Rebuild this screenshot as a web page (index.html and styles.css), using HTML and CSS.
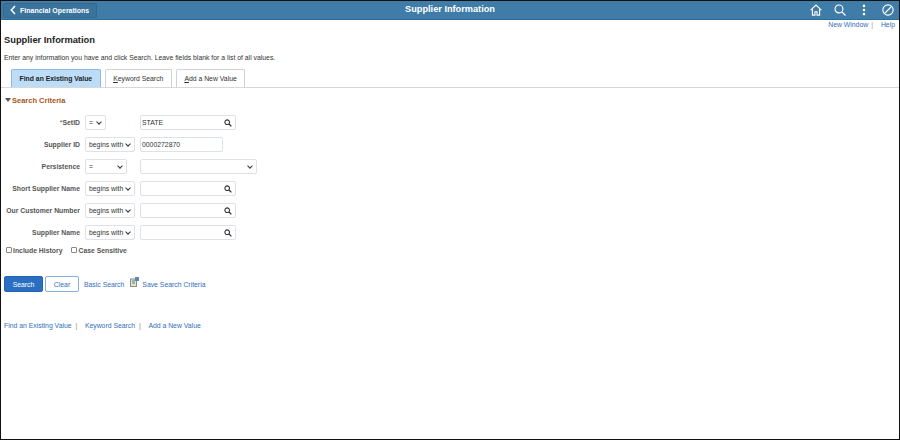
FILE: index.html
```html
<!DOCTYPE html>
<html lang="en">
<head>
<meta charset="utf-8">
<title>Supplier Information</title>
<link rel="stylesheet" href="styles.css">
</head>
<body>
<div class="frame">
  <header class="banner">
    <button class="back"><svg width="6" height="10" viewBox="0 0 6 10"><path d="M5 1 1.300 5 5 9" fill="none" stroke="#fff" stroke-width="1.500"/></svg><span>Financial Operations</span></button>
    <h1 class="banner-title">Supplier Information</h1>
    <div class="banner-icons">
      <svg width="12" height="12" viewBox="0 0 14 14"><path d="M.8 7.200 7 1.200l6.200 6M2.800 6v7h3V9h2.400v4h3V6" fill="none" stroke="#fff" stroke-width="1.300"/></svg>
      <svg width="12" height="12" viewBox="0 0 14 14"><circle cx="5.800" cy="5.800" r="4.600" fill="none" stroke="#fff" stroke-width="1.300"/><path d="m9.200 9.200 4.200 4.200" stroke="#fff" stroke-width="1.500"/></svg>
      <svg width="12" height="12" viewBox="0 0 14 14"><circle cx="7" cy="2.200" r="1.500" fill="#fff"/><circle cx="7" cy="7" r="1.500" fill="#fff"/><circle cx="7" cy="11.800" r="1.500" fill="#fff"/></svg>
      <svg width="12" height="12" viewBox="0 0 14 14"><circle cx="7" cy="7" r="6" fill="none" stroke="#fff" stroke-width="1.300"/><path d="M3.500 10.500 10.500 3.500" stroke="#fff" stroke-width="1.300"/></svg>
    </div>
  </header>
  <nav class="toplinks"><a>New Window</a><span class="sep">|</span><a class="help">Help</a></nav>
  <main class="content">
    <h2 class="page-title">Supplier Information</h2>
    <p class="hint">Enter any information you have and click Search. Leave fields blank for a list of all values.</p>
    <div class="tabs">
      <div class="tab active">Find an Existing Value</div>
      <div class="tab"><span><u>K</u>eyword Search</span></div>
      <div class="tab"><span><u>A</u>dd a New Value</span></div>
    </div>
    <div class="section"><span class="caret"></span>Search Criteria</div>
    <div class="form">
      <label class="lbl"><span class="req">*</span>SetID</label>
      <div class="sel sel-short">=</div>
      <div class="inp inp-look">STATE<svg class="mag" viewBox="0 0 10 10"><circle cx="4" cy="4" r="2.900" fill="none" stroke="#333" stroke-width="1.400"/><path d="m6.200 6.200 3 3" stroke="#333" stroke-width="1.600"/></svg></div>

      <label class="lbl">Supplier ID</label>
      <div class="sel">begins with</div>
      <div class="inp inp-plain">0000272870</div>

      <label class="lbl">Persistence</label>
      <div class="sel sel-mid">=</div>
      <div class="sel sel-wide"></div>

      <label class="lbl">Short Supplier Name</label>
      <div class="sel">begins with</div>
      <div class="inp inp-look"><svg class="mag" viewBox="0 0 10 10"><circle cx="4" cy="4" r="2.900" fill="none" stroke="#333" stroke-width="1.400"/><path d="m6.200 6.200 3 3" stroke="#333" stroke-width="1.600"/></svg></div>

      <label class="lbl">Our Customer Number</label>
      <div class="sel">begins with</div>
      <div class="inp inp-look"><svg class="mag" viewBox="0 0 10 10"><circle cx="4" cy="4" r="2.900" fill="none" stroke="#333" stroke-width="1.400"/><path d="m6.200 6.200 3 3" stroke="#333" stroke-width="1.600"/></svg></div>

      <label class="lbl">Supplier Name</label>
      <div class="sel">begins with</div>
      <div class="inp inp-look"><svg class="mag" viewBox="0 0 10 10"><circle cx="4" cy="4" r="2.900" fill="none" stroke="#333" stroke-width="1.400"/><path d="m6.200 6.200 3 3" stroke="#333" stroke-width="1.600"/></svg></div>
    </div>
    <div class="checks">
      <span class="check"><i class="box"></i>Include History</span>
      <span class="check"><i class="box"></i>Case Sensitive</span>
    </div>
    <div class="actions">
      <button class="btn btn-primary">Search</button>
      <button class="btn btn-secondary">Clear</button>
      <a class="link basic">Basic Search</a>
      <svg class="save-icon" width="9" height="10" viewBox="0 0 9 10"><rect x="0.500" y="2" width="6" height="7.500" fill="#e8e3b8" stroke="#7d8fa6"/><path d="M2 4h3M2 6h3" stroke="#6b7b8f"/><rect x="5" y="0" width="4" height="4" fill="#5f84b5"/></svg>
      <a class="link">Save Search Criteria</a>
    </div>
    <div class="bottom-links">
      <a>Find an Existing Value</a><span class="sep">|</span>
      <a>Keyword Search</a><span class="sep">|</span>
      <a>Add a New Value</a>
    </div>
  </main>
</div>
</body>
</html>
```
FILE: styles.css
```css
* { box-sizing: border-box; }
html, body { margin: 0; height: 100%; }
body { font-family: "Liberation Sans", Arial, sans-serif; color: #333; background: #fff; }
.frame { width: 900px; height: 440px; border: 1px solid #111; display: flex; flex-direction: column; overflow: hidden; }
.banner { height: 19px; flex: none; background: #3f7ca8; border-bottom: 1px solid #2e6a96; display: flex; align-items: center; position: relative; padding-left: 2px; }
.back { height: 15px; width: 94px; margin: 0; padding: 0 0 0 6px; display: flex; align-items: center; gap: 4px; background: #3a739c; border: 1px solid #33688f; border-radius: 2px; color: #fff; font: bold 7px "Liberation Sans", sans-serif; white-space: nowrap; }
.banner-title { position: absolute; left: 0; right: 0; top: 1px; margin: 0; text-align: center; font-size: 9.200px; font-weight: bold; color: #fff; line-height: 14px; pointer-events: none; }
.banner-icons { margin-left: auto; margin-right: 5px; display: flex; gap: 12px; }
.toplinks { display: flex; justify-content: flex-end; align-items: center; height: 9px; padding-right: 4px; font-size: 6.850px; color: #2f6fc0; }
.toplinks .sep { margin: 0 8px 0 3px; color: #999; }
.content { padding: 0 3px; }
.page-title { margin: 4px 0 0; font-size: 9.300px; line-height: 14px; font-weight: bold; color: #222; }
.hint { margin: 5px 0 0; font-size: 6.850px; line-height: 11px; color: #333; }
.tabs { display: flex; align-items: flex-end; gap: 4px; height: 19px; margin: 6px -3px 0; padding-left: 10px; border-bottom: 1px solid #d8d8d8; }
.tab { height: 18px; padding: 0 7.500px; display: flex; align-items: center; font-size: 6.850px; color: #333; border: 1px solid #cfd3d8; border-bottom: 0; border-radius: 2px 2px 0 0; background: #fff; }
.tab.active { background: #bcdcf7; border-color: #8dbbe3; font-weight: bold; color: #222; }
.section { display: flex; align-items: center; margin-top: 6px; height: 12px; font-size: 7.500px; font-weight: bold; color: #a9551b; }
.caret { width: 0; height: 0; margin: 0 1px; border: 3px solid transparent; border-top: 4px solid #555; border-bottom: 0; }
.form { display: grid; grid-template-columns: 76px 50px max-content; column-gap: 5px; row-gap: 6px; margin-top: 8px; align-items: center; justify-items: start; justify-content: start; grid-auto-rows: 16px; }
.lbl { justify-self: end; text-align: right; font-size: 6.850px; font-weight: bold; color: #555; white-space: nowrap; }
.req { color: #555; font-weight: normal; }
.sel, .inp { height: 15px; border: 1px solid #dde1e8; border-radius: 2px; background: #fff; font-size: 6.850px; color: #333; display: flex; align-items: center; position: relative; }
.sel { width: 50px; padding-left: 3px; }
.sel::after { content: ""; position: absolute; right: 4px; top: 4px; width: 3px; height: 3px; border: solid #333; border-width: 0 1.200px 1.200px 0; transform: rotate(45deg); }
.sel-short { width: 21px; }
.sel-mid { width: 42px; }
.sel-wide { width: 117px; }
.inp { padding-left: 1px; }
.inp-look { width: 96px; }
.inp-plain { width: 83px; }
.mag { position: absolute; right: 3px; top: 3px; width: 8px; height: 8px; }
.checks { display: flex; gap: 7px; align-items: center; margin-top: 5px; height: 10px; font-size: 6.850px; font-weight: bold; color: #555; }
.check { display: flex; align-items: center; gap: 1px; }
.box { width: 6px; height: 6px; border: 1px solid #888; border-radius: 1px; background: #fff; margin-left: 2px; }
.actions { display: flex; align-items: center; margin-top: 21px; height: 16px; font-size: 6.850px; }
.btn { height: 16px; width: 39px; padding: 0; border-radius: 2px; font: 6.850px "Liberation Sans", sans-serif; }
.btn-primary { background: #2b6fc2; border: 1px solid #2563b0; color: #fff; }
.btn-secondary { width: 34px; margin-left: 2px; background: #fff; border: 1px solid #8cb0de; color: #2f6fc0; }
.link { color: #2f6fc0; }
.basic { margin-left: 5px; }
.save-icon { margin: -5px 3px 0 6px; }
.bottom-links { margin-top: 28px; font-size: 6.850px; color: #2f6fc0; display: flex; align-items: center; height: 11px; }
.bottom-links .sep { margin: 0 7.500px 0 4px; color: #888; }
```
